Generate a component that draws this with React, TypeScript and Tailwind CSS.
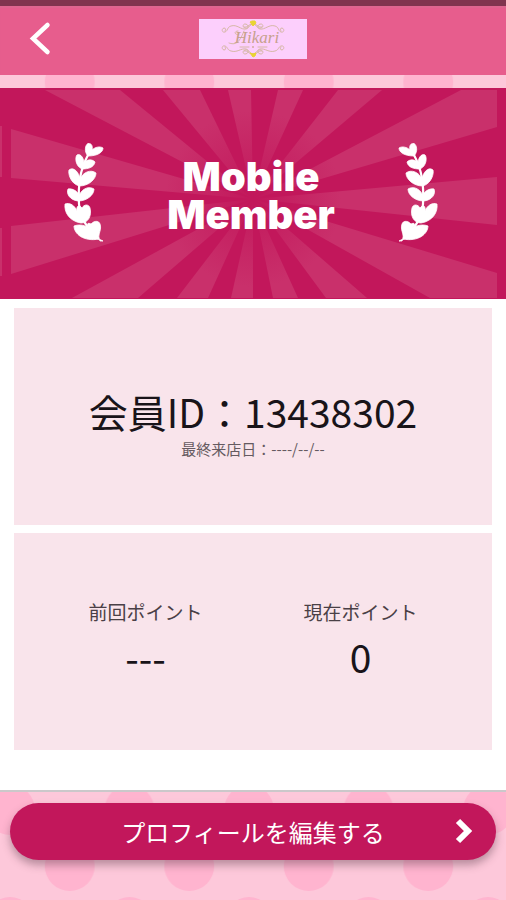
import React from "react";

const JP = "font-['Noto_Sans_CJK_JP',sans-serif]";

function Dots() {
  return (
    <svg className="absolute inset-0 h-full w-full" aria-hidden="true">
      <defs>
        <pattern id="dots" x="10" y="26" width="119.5" height="112" patternUnits="userSpaceOnUse">
          <g fill="#ffb4cf">
            <circle cx="59.75" cy="56" r="25" />
            <circle cx="0" cy="0" r="25" />
            <circle cx="119.5" cy="0" r="25" />
            <circle cx="0" cy="112" r="25" />
            <circle cx="119.5" cy="112" r="25" />
          </g>
        </pattern>
      </defs>
      <rect width="100%" height="100%" fill="url(#dots)" />
    </svg>
  );
}

function Logo() {
  return (
    <svg viewBox="0 0 108 40" className="h-10 w-[108px] bg-[#fccffc]" role="img" aria-label="Hikari">
      <g fill="none" stroke="#d6b8a6" strokeWidth="1" strokeLinecap="round">
        <path d="M54 5C49 5 49 9 45 8M54 5c-3 0-4 5-8 4-3-1-2-4 0-4 3 0 5 4 1 5-5 1-9-5-15-3-4 1-3 5-6 6-3 1-4-3-1-4 2 0 2 2 1 3" />
        <path d="M54 5c5 0 5 4 9 3M54 5c3 0 4 5 8 4 3-1 2-4 0-4-3 0-5 4-1 5 5 1 9-5 15-3 4 1 3 5 6 6 3 1 4-3 1-4-2 0-2 2-1 3" />
        <path d="M54 35c-5 0-5-4-9-3M54 35c-3 0-4-5-8-4-3 1-2 4 0 4 3 0 5-4 1-5-5-1-9 4-15 2-4-1-3-4-6-5-3-1-4 3-1 4 2 0 2-2 1-3" />
        <path d="M54 35c5 0 5-4 9-3M54 35c3 0 4-5 8-4 3 1 2 4 0 4-3 0-5-4-1-5 5-1 9 4 15 2 4-1 3-4 6-5 3-1 4 3 1 4-2 0-2-2-1-3" />
        <path d="M39 12c-5 0-3 5 1 3M45 12C40 25 36 26 30 24M41 28h9M59 28h9" />
      </g>
      <text x="58" y="24" textAnchor="middle" fill="#c6a18d" fontSize="17" fontStyle="italic" className="font-['Liberation_Serif',serif]">
        Hikari
      </text>
      <circle cx="54" cy="28" r="1" fill="#d0ad9f" />
      <path d="M51 3l2-1h3l1 2-3 3z M51 34l3 1 3-1-1 3-2 1z" fill="#e9d434" stroke="#e9d434" />
    </svg>
  );
}

function Rays() {
  return (
    <svg viewBox="0 0 506 211" preserveAspectRatio="none" className="absolute inset-0 h-full w-full" aria-hidden="true">
      <defs>
        <radialGradient id="ray" gradientUnits="userSpaceOnUse" cx="253" cy="111" r="110">
          <stop offset="0" stopColor="#c2175b" />
          <stop offset="0.8" stopColor="#c9306b" />
        </radialGradient>
      </defs>
      <g fill="url(#ray)">
        <path d="M253 111L45 2H120z" />
        <path d="M253 111L163 2H200z" />
        <path d="M253 111L228 2H251z" />
        <path d="M253 111L278 2H303z" />
        <path d="M253 111L338 2H382z" />
        <path d="M253 111L461 2H497V39z" />
        <path d="M253 111L497 89V137z" />
        <path d="M253 111L497 185V210H430z" />
        <path d="M253 111L326 210H367z" />
        <path d="M253 111L273 210H298z" />
        <path d="M253 111L231 210H253z" />
        <path d="M253 111L177 210H208z" />
        <path d="M253 111L72 210H138z" />
        <path d="M253 111L11 186V138z" />
        <path d="M253 111L11 90V41z" />
        <path d="M0 38H2V89H0zM0 140H2V188H0z" />
      </g>
    </svg>
  );
}

function Laurel({ className = "" }: { className?: string }) {
  return (
    <svg viewBox="0 0 40 100" className={`mb-1 h-[100px] w-10 fill-white ${className}`} aria-hidden="true">
      <path d="M24 13C16 28 14 42 15 62c1 12 8 26 20 35" fill="none" stroke="#fff" strokeWidth="2.2" />
      <g stroke="#fff" strokeWidth="0.8" strokeLinejoin="round">
        <path d="M24 14C20 10 21 3 24 1.500C28 1 29 5 28 8C31 5 36 4 39 6C39 10 34 14 24 14z" />
        <path d="M18 27C11 24 11 15 13 13C17 11 20 17 20 21C23 17 28 17 31 20C30 25 25 27 18 27z" />
        <path d="M15 44C6 41 4 31 5 28C10 24 15 31 16 37C19 30 27 27 32 31C32 37 25 44 15 44z" />
        <path d="M14 59C6 58 2 52 4 47C9 46 14 50 15 53C19 46 25 44 30 47C30 53 23 59 14 59z" />
        <path d="M17 81C5 79 0 70 1 62C6 60 11 64 13 69C12 64 15 62 18 66C20 62 25 62 26 66C28 74 24 81 17 81z" />
        <path d="M35 97C20 100 10 92 10 84C15 82 22 83 26 87C22 83 23 80 27 82C31 78 35 79 36 82C38 88 34 91 35 97L39 99H36z" />
      </g>
    </svg>
  );
}

function Point({ label, value }: { label: string; value: string }) {
  return (
    <div className="flex flex-col items-center">
      <dt className="text-[19px] leading-7 text-[#4a4046]">{label}</dt>
      <dd className="text-[39px] leading-[60px] text-[#191419]">{value}</dd>
    </div>
  );
}

export default function App() {
  return (
    <div className={`relative flex min-h-screen flex-col bg-[#fdc8da] ${JP}`}>
      <Dots />
      <header className="relative grid h-[75px] grid-cols-[1fr_auto_1fr] items-center border-t-[6px] border-[#81344f] bg-[#e75d8d] pb-1 shadow-[inset_0_2px_1px_#df6590]">
        <button type="button" aria-label="戻る" className="ml-5 h-10 w-10">
          <svg viewBox="0 0 40 40" className="h-10 w-10" fill="none" stroke="#fff" strokeWidth="4.500" strokeLinecap="round">
            <path d="M27.500 6L13 19.500L27.500 33" />
          </svg>
        </button>
        <Logo />
      </header>

      <section className="relative mt-[13px] h-[211px] bg-[#c2175b]">
        <Rays />
        <div className="relative flex h-full items-center justify-between pr-[68px] pl-16">
          <Laurel />
          <h1 className="pt-1 text-center font-['Inter',sans-serif] text-[40px] leading-[38px] font-black text-white">
            <span className="block">Mobile</span>
            <span className="block">Member</span>
          </h1>
          <Laurel className="-scale-x-100" />
        </div>
      </section>

      <main className="relative grid flex-1 auto-rows-fr gap-2 bg-white px-[14px] pt-[9px] pb-10">
        <section className="flex flex-col items-center justify-center bg-[#f9e4eb] pt-3">
          <p className="text-[39px] leading-[52px] text-[#191419]">会員ID：13438302</p>
          <p className="text-[15px] leading-6 text-[#655a60]">最終来店日：----/--/--</p>
        </section>
        <dl className="grid grid-cols-2 items-center bg-[#f9e4eb] px-6">
          <Point label="前回ポイント" value="---" />
          <Point label="現在ポイント" value="0" />
        </dl>
      </main>

      <footer className="relative h-[110px] border-t-2 border-[#cbc8ca] px-[10px] pt-[11px]">
        <button
          type="button"
          className="relative flex h-[57px] w-full items-center justify-center rounded-full bg-[#c2175b] text-2xl text-white shadow-[0_5px_9px_rgba(80,50,65,0.4)]"
        >
          プロフィールを編集する
          <svg viewBox="0 0 20 28" className="absolute right-[22px] h-7 w-5" fill="none" stroke="#fff" strokeWidth="6" aria-hidden="true">
            <path d="M4 3L14 13L4 23" />
          </svg>
        </button>
      </footer>
    </div>
  );
}
